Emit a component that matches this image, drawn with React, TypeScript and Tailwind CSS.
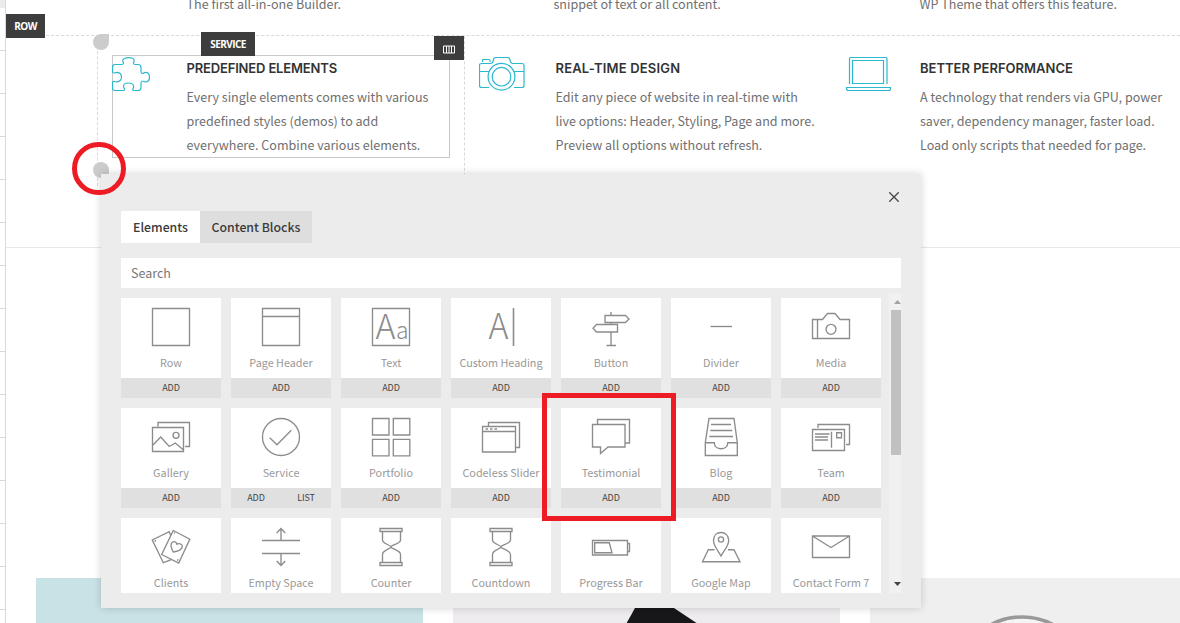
import React from "react";

const sans = "font-['Noto_Sans_CJK_SC',sans-serif]";

type Icon = React.ReactNode;

type Card = { name: string; icon: Icon; actions?: string[] };

const hourglass = (
  <>
    <path d="M9 1.5h22v3H9zM9 35.5h22v3H9z" />
    <path d="M11.500 4.500v8.500c0 4 8.500 5 8.500 7s-8.500 3-8.500 7.500v8M29.500 4.500v8.500c0 4-9.500 5-9.500 7s9.500 3 9.500 7.500v8" />
  </>
);

const cards: Card[] = [
  { name: "Row", icon: <path d="M1.500 1.500h37v37h-37z" /> },
  { name: "Page Header", icon: <path d="M1.500 1.500h37v37h-37zM1.500 9.500h37" /> },
  {
    name: "Text",
    icon: (
      <>
        <path d="M1.500 1.500h37v37h-37z" />
        <text x="4.500" y="31.500" fontSize="34" fontWeight="300" fill="#8c8c8c" stroke="none" textLength="20" lengthAdjust="spacingAndGlyphs">A</text>
        <text x="25" y="31.500" fontSize="23" fontWeight="300" fill="#8c8c8c" stroke="none">a</text>
      </>
    ),
  },
  {
    name: "Custom Heading",
    icon: (
      <>
        <text x="7.500" y="32" fontSize="35" fontWeight="300" fill="#8c8c8c" stroke="none" textLength="20" lengthAdjust="spacingAndGlyphs">A</text>
        <path d="M32.500 1v38" strokeWidth="1.600" />
      </>
    ),
  },
  {
    name: "Button",
    icon: <path d="M20 5v3M14 8.500h20.500l3.500 3.500-3.500 3.500H14zM20 15.500v2M26.500 17.500H5.500L2 21.300l3.500 3.700h21zM20 25v13.500M15.500 38.500H25" />,
  },
  { name: "Divider", icon: <path d="M9.500 19.500H31" /> },
  {
    name: "Media",
    icon: (
      <>
        <path d="M1.500 12.500h10l5-6h7.500l5 6h9.500v19h-37zM6.500 12.500v19" />
        <circle cx="20" cy="22.300" r="5" />
      </>
    ),
  },
  {
    name: "Gallery",
    icon: (
      <>
        <path d="M1.500 10.500h31v24h-31zM7 9.500v-4h31.500v24H34M2 28l7.700-8 8.600 9.500 6-3.500 8.200 7" />
        <circle cx="25" cy="18.300" r="3" />
      </>
    ),
  },
  {
    name: "Service",
    icon: (
      <>
        <circle cx="20" cy="20" r="18.500" />
        <path d="m8.700 20.700 7.300 7 14.300-14.400" />
      </>
    ),
    actions: ["ADD", "LIST"],
  },
  { name: "Portfolio", icon: <path d="M1.500 1.500h16.500v16.500H1.500zM22.300 1.500h16.500v16.500H22.300zM1.500 22.300h16.500v16.500H1.500zM22.300 22.300h16.500v16.500H22.300z" /> },
  {
    name: "Codeless Slider",
    icon: (
      <>
        <path d="M1.500 9.500h33v25.500h-33zM1.500 14.500h33M7.500 9V5.500h31v25H35" />
        <path d="M4.500 12h12.500" strokeDasharray="2.500 2" />
      </>
    ),
  },
  { name: "Testimonial", icon: <path d="M1.500 7.500h32.500v22.500H17l-7.500 6.500V30h-8zM6.500 7V2.500h32V26H34.500" /> },
  {
    name: "Blog",
    icon: <path d="M4.300 25.700 8 1.500h25l3.300 24.200v12.800h-32zh9c0 8 13.500 8 13.500 0h9.500M10 7.500h20M9.300 13.500h22M8.300 19.500H32" />,
  },
  {
    name: "Team",
    icon: <path d="M1.500 12.500h32v21h-32zM7 11V7.500h31.500v20H35M4 17h14.500M4 20h13M4 23h13M20.500 14.700v16M25.700 15.700h4.800v5h-4.800z" />,
  },
  {
    name: "Clients",
    icon: (
      <>
        <path d="m22.300 3.500 16.500 8.700L27.700 36l-17-8.500zM19.500 8l-1.300-3.300L1.300 13l11 22.700 8-3" />
        <path d="M22.300 25c-2-3.500-3-8-1-9.700 1.700-1.300 4-.5 4.500 1.700 2-.7 5.200-.5 5.500 2 .3 3.500-4.300 5.300-9 6z" />
        <path d="M3.500 14h1.500M23 6h1M26 33h1.500" />
      </>
    ),
  },
  {
    name: "Empty Space",
    icon: <path d="M1 13.500h38M1 26.500h38M20 13V1.500M15.700 6 20 1.500 24.300 6M20 27v11.500M15.700 34l4.300 4.500 4.300-4.500" />,
  },
  { name: "Counter", icon: hourglass },
  { name: "Countdown", icon: hourglass },
  {
    name: "Progress Bar",
    icon: <path d="M1.500 13.500H36.500v14.500H1.500zM36.500 16.500h2v8h-2M3.700 15.700h14.600L21 25.700H3.700z" />,
  },
  {
    name: "Google Map",
    icon: (
      <>
        <path d="M20 29c-3-5.500-7.500-10-7.500-15.500C12.500 8.500 15.700 5.500 20 5.500s7.700 3 7.700 8C27.700 19 23 23.500 20 29z" />
        <circle cx="20" cy="12.500" r="2.600" />
        <path d="M13.500 22.700H7.300L1.500 34.700h37.500L33 22.700h-6" />
      </>
    ),
  },
  { name: "Contact Form 7", icon: <path d="M1.500 9h37v21.500h-37zL20 20.500 38.500 9" /> },
];

function ElementCard({ name, icon, actions = ["ADD"] }: Card) {
  return (
    <div className="flex h-[100px] w-[100px] flex-col bg-white">
      <div className="flex h-20 flex-col items-center pt-[9px]">
        <svg width="40" height="40" viewBox="0 0 40 40" fill="none" stroke="#8c8c8c" strokeWidth="1.350" className="shrink-0">
          {icon}
        </svg>
        <span className="mt-[6px] text-[10.800px] leading-[18px] whitespace-nowrap text-[#999]">{name}</span>
      </div>
      <div className="flex h-5 bg-[#e0e0e0] text-[9px] leading-[19px] tracking-[-0.150px] text-[#444]">
        {actions.map((a) => (
          <span key={a} className="flex-1 text-center">{a}</span>
        ))}
      </div>
    </div>
  );
}

function Feature({ title, lines, icon, gutter, tracking }: { title: string; lines: string[]; icon: Icon; gutter: string; tracking: string }) {
  return (
    <div className="flex">
      <div className={`shrink-0 ${gutter}`}>
        <svg width="46" height="35" viewBox="0 0 46 35" fill="none" stroke="#2cb8cf" strokeWidth="1.200" className="mt-px">
          {icon}
        </svg>
      </div>
      <div className="whitespace-nowrap">
        <h3 className={`h-[29px] font-[Inter,sans-serif] text-[13px] leading-[25px] font-semibold text-[#333] ${tracking}`}>{title}</h3>
        {lines.map((l) => (
          <p key={l} className="text-[12.550px] leading-6 text-[#707070]">{l}</p>
        ))}
      </div>
    </div>
  );
}

function Rail() {
  return (
    <div className="w-[6px] shrink-0 border-r border-[#d9d9d9]">
      <div className="h-2 bg-[#ececec]" />
      <div className="h-[43px] border-b border-[#d9d9d9]" />
      {Array.from({ length: 14 }, (_, i) => (
        <div key={i} className="h-[43px] border-b border-[#d9d9d9]" />
      ))}
    </div>
  );
}

function Dialog() {
  return (
    <div className="absolute top-[174px] left-[101px] h-[434px] w-[820px] bg-[#ececec] px-5 shadow-[0_0_8px_rgba(0,0,0,0.18)]">
      <div className="flex h-[37px] justify-end pt-[18px] pr-[2px]">
        <svg width="10" height="10" viewBox="0 0 10 10" stroke="#444" strokeWidth="1.300">
          <path d="m.3.300 9.400 9.400M9.700.300.300 9.700" />
        </svg>
      </div>
      <div className="flex h-8 text-center text-[12.300px] leading-8 font-medium whitespace-nowrap text-[#3a3a3a]">
        <div className="w-[79px] bg-white">Elements</div>
        <div className="w-[112px] bg-[#dedede]">Content Blocks</div>
      </div>
      <div className="mt-[15px] h-[30px] bg-white pl-[10px] text-[12.500px] leading-[30px] text-[#777]">Search</div>
      <div className="mt-[5px] flex h-[300px] overflow-hidden">
        <div className="grid w-[768px] shrink-0 grid-cols-[repeat(7,100px)] content-start gap-[10px] pt-[5px]">
          {cards.map((c) => (
            <ElementCard key={c.name} {...c} />
          ))}
        </div>
        <div className="flex w-[17px] flex-col items-center bg-[#f1f1f1]">
          <svg width="17" height="17" viewBox="0 0 17 17" className="shrink-0">
            <path d="M5 11h7L8.500 7z" fill="#a3a3a3" />
          </svg>
          <div className="h-[145px] w-[13px] bg-[#c1c1c1]" />
          <svg width="17" height="17" viewBox="0 0 17 17" className="mt-auto">
            <path d="M5 6h7l-3.500 4z" fill="#444" />
          </svg>
        </div>
      </div>
    </div>
  );
}

export default function App() {
  return (
    <div className={`relative flex h-[623px] w-[1180px] overflow-hidden bg-white ${sans}`}>
      <Rail />
      <main className="flex w-[1174px] shrink-0 flex-col">
        <div className="grid h-[35px] grid-cols-[367px_366px_300px] pl-[180.500px] text-[12.550px] leading-6 whitespace-nowrap text-[#707070]">
          <p className="-mt-2">The first all-in-one Builder.</p>
          <p className="-mt-2">snippet of text or all content.</p>
          <p className="-mt-2">WP Theme that offers this feature.</p>
        </div>
        <section className="flex h-[213px] border-t border-b border-t-[#d9d9d9] border-b-[#e8e8e8] pl-[91px] [border-top-style:dashed]">
          <div className="h-[150px] w-[368px] shrink-0 border-x border-dashed border-[#d9d9d9] px-[14px] pt-[19px]">
            <div className="h-[103px] w-[338px] border border-[#c9c9c9]">
              <div className="-ml-px">
                <Feature
                  title="PREDEFINED ELEMENTS"
                  gutter="w-[74.500px]"
                  tracking="tracking-[-0.160px]"
                  lines={["Every single elements comes with various", "predefined styles (demos) to add", "everywhere. Combine various elements."]}
                  icon={<path d="M3 7.500h6.500q2 0 2-1.500c0-.8-.8-1-.8-2.300 0-2 2.500-3 5.800-3s5.700 1 5.700 3c0 1.300-.8 1.500-.8 2.300q0 1.500 2 1.500H26q3 0 3 3v4q0 2 1.500 2c1 0 1.500-1.200 3-1.200 2.300 0 4 2 4 5s-1.700 4.700-4 4.700c-1.500 0-2-1-3-1q-1.500 0-1.500 2V31q0 2.500-3 2.500h-4q-1.500 0-1.200-1.500c.3-1 1-1.500.8-3-.3-2-2.300-3-5.100-3s-4.800 1-5 3c0 1.500.7 2 1 3q.2 1.500-1.500 1.500H3q-2.500 0-2.500-2.500v-5q0-2 1.500-1.700c1 .2 1.500.7 3 .5 2.500-.2 4.500-2 4.500-4.800S7.500 15.500 5 15.300c-1.500 0-2 .5-3 .7q-1.500 0-1.500-1.500v-4q0-3 2.500-3z" />}
                />
              </div>
            </div>
          </div>
          <div className="w-[367px] shrink-0 pt-[20px] pl-[14px]">
            <Feature
              title="REAL-TIME DESIGN"
              gutter="w-[76.500px]"
              tracking="tracking-[0.180px]"
              lines={["Edit any piece of website in real-time with", "live options: Header, Styling, Page and more.", "Preview all options without refresh."]}
              icon={
                <>
                  <circle cx="22.500" cy="19.700" r="13.400" />
                  <circle cx="22.500" cy="19.700" r="9.300" />
                  <path d="M10 30.500H2.500q-2 0-2-2v-20q0-2 2-2h9q2 0 2.500-2l.5-2q.5-2 2.500-2h11.500q2 0 2.300 2l.7 2q.5 2 2.500 2h9q2 0 2 2v20q0 2-2 2H35M.5 14.500h9.500M35 14.500h9.500M3.500 5V3.500q0-1 1-1H10q1 0 1 1V5" />
                </>
              }
            />
          </div>
          <div className="shrink-0 pt-[20px] pl-[14px]">
            <Feature
              title="BETTER PERFORMANCE"
              gutter="w-[74px]"
              tracking="tracking-normal"
              lines={["A technology that renders via GPU, power", "saver, dependency manager, faster load.", "Load only scripts that needed for page."]}
              icon={
                <>
                  <path d="M3.500 27V2q0-1.500 1.500-1.500h34.500q1.500 0 1.500 1.500v25M6.500 3.500h31v23h-31z" />
                  <path d="M.5 30.500h44v1q0 2-2 2h-40q-2 0-2-2z" />
                </>
              }
            />
          </div>
        </section>
        <div className="mt-[330px] flex h-[45px] gap-[30px] pl-[30px]">
          <div className="w-[387px] shrink-0 bg-[#c9e2e5]" />
          <div className="w-[387px] shrink-0 bg-[#eeecef]">
            <svg width="387" height="45" viewBox="0 0 387 45">
              <path d="M172 48 182 30h39l27 18z" fill="#171618" />
            </svg>
          </div>
          <div className="w-[310px] shrink-0 bg-[#efefef]">
            <svg width="310" height="45" viewBox="0 0 310 45">
              <circle cx="152" cy="104" r="65" fill="#f4f4f4" stroke="#999" strokeWidth="3.500" />
            </svg>
          </div>
        </div>
      </main>

      <div className="absolute top-[14px] left-[6px] h-6 w-[39px] bg-[#3d3d3d] text-center font-['Open_Sans',sans-serif] text-[10px] leading-6 font-bold tracking-[-0.550px] text-white">ROW</div>
      <div className="absolute top-8 left-[201px] h-6 w-[54px] bg-[#3d3d3d] text-center font-['Open_Sans',sans-serif] text-[10px] leading-6 font-bold tracking-[-0.550px] text-white">SERVICE</div>
      <div className="absolute top-9 left-[434px] flex h-6 w-[30px] items-center justify-center bg-[#3d3d3d]">
        <svg width="12" height="9" viewBox="0 0 12 9" fill="none" stroke="#fff" className="mt-[2px]">
          <path d="M.5 1h11v7H.5zM3.500 1v7M6 1v7M8.500 1v7" />
        </svg>
      </div>
      <div className="absolute top-[34px] left-[93px] size-4 rounded-full rounded-tr-none bg-[#ccc]" />
      <div className="absolute top-[162px] left-[93px] size-4 rounded-full rounded-br-none bg-[#ccc]" />
      <Dialog />
      <div className="absolute top-[142px] left-[72px] h-[53px] w-[54px] rounded-full border-5 border-[#ed1c24]" />
      <div className="absolute top-[393px] left-[542px] h-32 w-[134px] border-5 border-[#ed1c24]" />
    </div>
  );
}
